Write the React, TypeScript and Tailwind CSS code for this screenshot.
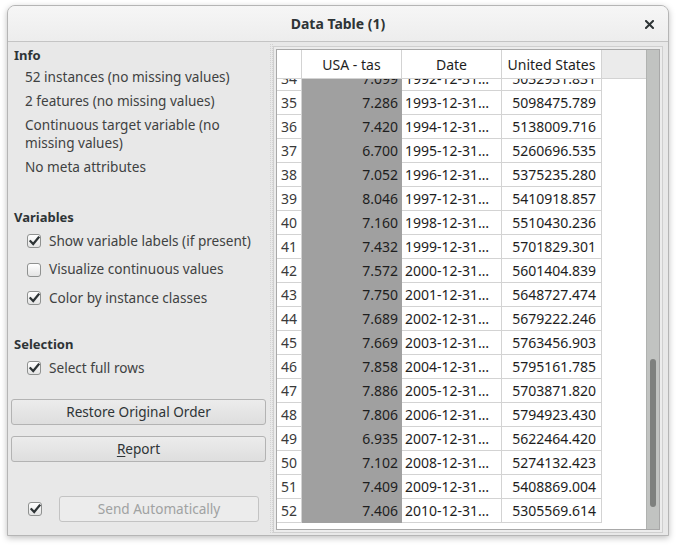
import React from "react";

const rows: [number, string, string, string][] = [
  [34, "7.099", "1992-12-31…", "5032931.831"],
  [35, "7.286", "1993-12-31…", "5098475.789"],
  [36, "7.420", "1994-12-31…", "5138009.716"],
  [37, "6.700", "1995-12-31…", "5260696.535"],
  [38, "7.052", "1996-12-31…", "5375235.280"],
  [39, "8.046", "1997-12-31…", "5410918.857"],
  [40, "7.160", "1998-12-31…", "5510430.236"],
  [41, "7.432", "1999-12-31…", "5701829.301"],
  [42, "7.572", "2000-12-31…", "5601404.839"],
  [43, "7.750", "2001-12-31…", "5648727.474"],
  [44, "7.689", "2002-12-31…", "5679222.246"],
  [45, "7.669", "2003-12-31…", "5763456.903"],
  [46, "7.858", "2004-12-31…", "5795161.785"],
  [47, "7.886", "2005-12-31…", "5703871.820"],
  [48, "7.806", "2006-12-31…", "5794923.430"],
  [49, "6.935", "2007-12-31…", "5622464.420"],
  [50, "7.102", "2008-12-31…", "5274132.423"],
  [51, "7.409", "2009-12-31…", "5408869.004"],
  [52, "7.406", "2010-12-31…", "5305569.614"],
];

function Check({ checked }: { checked: boolean }) {
  return (
    <div className="w-[14px] h-[14px] rounded-[3px] border border-[#8f9190] bg-gradient-to-b from-white to-[#e4e4e4] flex items-center justify-center shrink-0">
      {checked && (
        <svg width="11" height="10" viewBox="0 0 11 10">
          <path d="M1.5 5.2 L4.2 8 L9.5 1.5" fill="none" stroke="#2e3436" strokeWidth="2.2" strokeLinecap="square" />
        </svg>
      )}
    </div>
  );
}

function CheckRow({ checked, label, h = "h-[28px]" }: { checked: boolean; label: string; h?: string }) {
  return (
    <div className={`${h} flex items-center pl-[16px] gap-[8px]`}>
      <Check checked={checked} />
      <span>{label}</span>
    </div>
  );
}

export default function App() {
  return (
    <div
      className="w-[676px] h-[545px] bg-white pt-[5px] pl-[7px] overflow-hidden"
      style={{ fontFamily: "'Noto Sans', 'Open Sans', sans-serif" }}
    >
      <div className="w-[662px] h-[531px] rounded-t-[8px] border border-[#b5b5b5] bg-[#e8e8e8] shadow-[0_2px_6px_rgba(0,0,0,0.25)] flex flex-col overflow-hidden">
        {/* Title bar */}
        <div className="h-[36px] shrink-0 bg-gradient-to-b from-[#f6f6f6] to-[#ededed] border-b border-[#c4c4c4] flex items-center relative">
          <div className="flex-1 text-center text-[14px] font-bold text-[#2e3436]">Data Table (1)</div>
          <div className="absolute right-[14px] top-[14px]">
            <svg width="9" height="9" viewBox="0 0 9 9">
              <path d="M1 1 L8 8 M8 1 L1 8" stroke="#2e3436" strokeWidth="2" strokeLinecap="square" />
            </svg>
          </div>
        </div>

        {/* Body */}
        <div className="flex-1 flex min-h-0">
          {/* Left panel */}
          <div className="w-[262px] shrink-0 flex flex-col text-[13.6px] text-[#3f4242] pl-[3px] pr-[4px]">
            <div className="pl-[3px] pt-[3px] leading-[20px] font-bold text-[13px] text-[#2e3436]">Info</div>
            <div className="pl-[14px] mt-[3px] flex flex-col gap-[6px] leading-[18px]">
              <div>52 instances (no missing values)</div>
              <div>2 features (no missing values)</div>
              <div>Continuous target variable (no<br />missing values)</div>
              <div>No meta attributes</div>
            </div>

            <div className="pl-[3px] mt-[31px] leading-[20px] font-bold text-[13px] text-[#2e3436]">Variables</div>
            <CheckRow checked label="Show variable labels (if present)" />
            <CheckRow checked={false} label="Visualize continuous values" h="h-[29px]" />
            <CheckRow checked label="Color by instance classes" />

            <div className="pl-[3px] mt-[22px] leading-[20px] font-bold text-[13px] text-[#2e3436]">Selection</div>
            <CheckRow checked label="Select full rows" />

            <button className="mt-[17px] h-[26px] rounded-[3px] border border-[#b3b3b3] bg-gradient-to-b from-[#ececec] to-[#dedede] text-[#2e3436]">
              Restore Original Order
            </button>
            <button className="mt-[11px] h-[26px] rounded-[3px] border border-[#b3b3b3] bg-gradient-to-b from-[#ececec] to-[#dedede] text-[#2e3436]">
              <span className="underline underline-offset-2">R</span>eport
            </button>

            <div className="mt-[34px] flex items-center">
              <div className="pl-[17px] pr-[17px]">
                <Check checked />
              </div>
              <button className="w-[200px] h-[26px] rounded-[3px] border border-[#c3c3c3] bg-[#ececec] text-[#a0a2a2]">
                Send Automatically
              </button>
            </div>
          </div>

          {/* Splitter */}
          <div className="w-[3px] shrink-0 my-[2px] border-x border-dotted border-[#d2d2d2]" />

          {/* Table frame */}
          <div className="flex-1 mt-[4px] mb-[2px] mr-[5px] border border-[#cfcfcf] p-[2px] bg-[#ececec]">
            <div className="h-full border border-[#a8a8a8] bg-white flex text-[14px] text-[#1e1e1e]">
              <div className="flex-1 flex flex-col min-w-0">
                {/* Header */}
                <div className="h-[29px] shrink-0 flex bg-[#ebebeb] border-b border-[#d3d3d3] relative z-10">
                  <div className="w-[25px] bg-white border-r border-[#d3d3d3]" />
                  <div className="w-[100px] bg-white border-r border-[#d3d3d3] flex items-center justify-center">USA - tas</div>
                  <div className="w-[100px] bg-white border-r border-[#d3d3d3] flex items-center justify-center">Date</div>
                  <div className="w-[100px] bg-white border-r border-[#d3d3d3] flex items-center justify-center">United States</div>
                </div>
                {/* Rows */}
                <div className="flex-1 overflow-hidden">
                  <div className="-mt-[12px]">
                    {rows.map(([n, a, d, u]) => (
                      <div key={n} className="h-[24px] flex">
                        <div className="w-[25px] border-r border-b border-[#d3d3d3] pl-[4px] flex items-center text-[#3a3a3a]">{n}</div>
                        <div className="w-[100px] bg-[#a0a0a0] border-b border-[#a0a0a0] pr-[4px] flex items-center justify-end">{a}</div>
                        <div className="w-[100px] border-r border-b border-[#d3d3d3] pl-[3px] flex items-center">{d}</div>
                        <div className="w-[100px] border-r border-b border-[#d3d3d3] pr-[5px] flex items-center justify-end">{u}</div>
                      </div>
                    ))}
                  </div>
                </div>
              </div>
              {/* Scrollbar */}
              <div className="w-[13px] shrink-0 bg-[#c1c3c1] border-l border-[#b0b2b0] flex flex-col">
                <div className="mt-[309px] h-[148px] mx-auto w-[6px] rounded-[3px] bg-[#7e807e]" />
              </div>
            </div>
          </div>
        </div>
      </div>
    </div>
  );
}
